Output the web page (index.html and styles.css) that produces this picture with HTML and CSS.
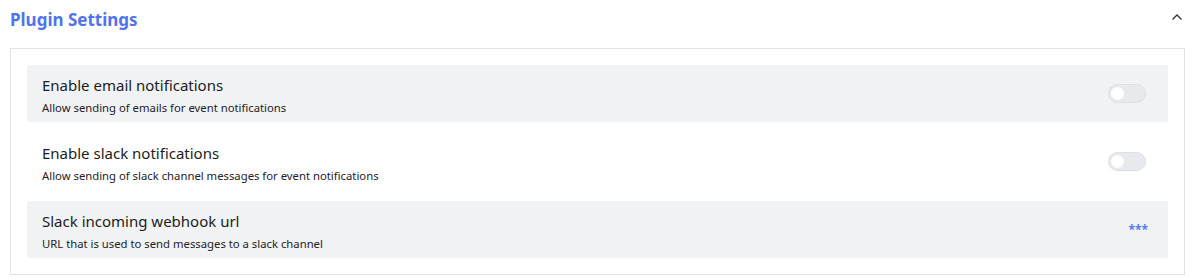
FILE: index.html
```html
<!DOCTYPE html>
<html lang="en">
<head>
<meta charset="utf-8">
<title>Plugin Settings</title>
<link rel="stylesheet" href="styles.css">
</head>
<body>
<section class="panel">
  <header class="panel-header">
    <h2 class="panel-title">Plugin Settings</h2>
    <svg class="chevron" width="12" height="8" viewBox="0 0 12 8" aria-hidden="true">
      <path d="M1.5 6.5 L6 2 L10.5 6.5" fill="none" stroke="#333" stroke-width="1.3"/>
    </svg>
  </header>
  <div class="card">
    <div class="row shaded">
      <div class="text">
        <div class="row-title">Enable email notifications</div>
        <div class="row-desc">Allow sending of emails for event notifications</div>
      </div>
      <span class="toggle"><span class="knob"></span></span>
    </div>
    <div class="row">
      <div class="text">
        <div class="row-title">Enable slack notifications</div>
        <div class="row-desc">Allow sending of slack channel messages for event notifications</div>
      </div>
      <span class="toggle"><span class="knob"></span></span>
    </div>
    <div class="row shaded">
      <div class="text">
        <div class="row-title">Slack incoming webhook url</div>
        <div class="row-desc">URL that is used to send messages to a slack channel</div>
      </div>
      <span class="secret">***</span>
    </div>
  </div>
</section>
</body>
</html>
```

FILE: styles.css
```css
* { box-sizing: border-box; }
body {
  margin: 0;
  background: #ffffff;
  font-family: "Noto Sans", "Open Sans", sans-serif;
  color: #1f2328;
}
.panel {
  padding: 0 5px 0 10px;
}
.panel-header {
  display: flex;
  align-items: center;
  justify-content: space-between;
  height: 38px;
}
.panel-title {
  margin: 0;
  font-size: 17px;
  font-weight: 700;
  color: #4f73ea;
}
.chevron {
  margin-right: 2px;
  margin-top: -4px;
}
.card {
  margin-top: 10px;
  border: 1px solid #e1e3e7;
  padding: 16px;
  display: flex;
  flex-direction: column;
  gap: 11px;
}
.row {
  height: 57px;
  display: flex;
  align-items: center;
  justify-content: space-between;
  padding: 3px 22px 0 15px;
  border-radius: 2px;
}
.row.shaded {
  background: #f1f2f4;
}
.text {
  display: flex;
  flex-direction: column;
  gap: 6px;
}
.row-title {
  font-size: 15px;
  line-height: 18px;
  color: #1b1d21;
}
.row-desc {
  font-size: 11.3px;
  line-height: 15px;
  color: #1f2226;
}
.toggle {
  width: 38px;
  height: 19px;
  margin-top: -3px;
  border-radius: 10px;
  background: #e7e9ec;
  border: 1px solid #dde0e4;
  display: flex;
  align-items: center;
  padding-left: 2px;
}
.knob {
  width: 13px;
  height: 13px;
  border-radius: 50%;
  background: #ffffff;
}
.secret {
  color: #5b7bea;
  font-size: 12px;
  font-weight: 700;
  margin-top: -4px;
  margin-right: -2px;
}
```
